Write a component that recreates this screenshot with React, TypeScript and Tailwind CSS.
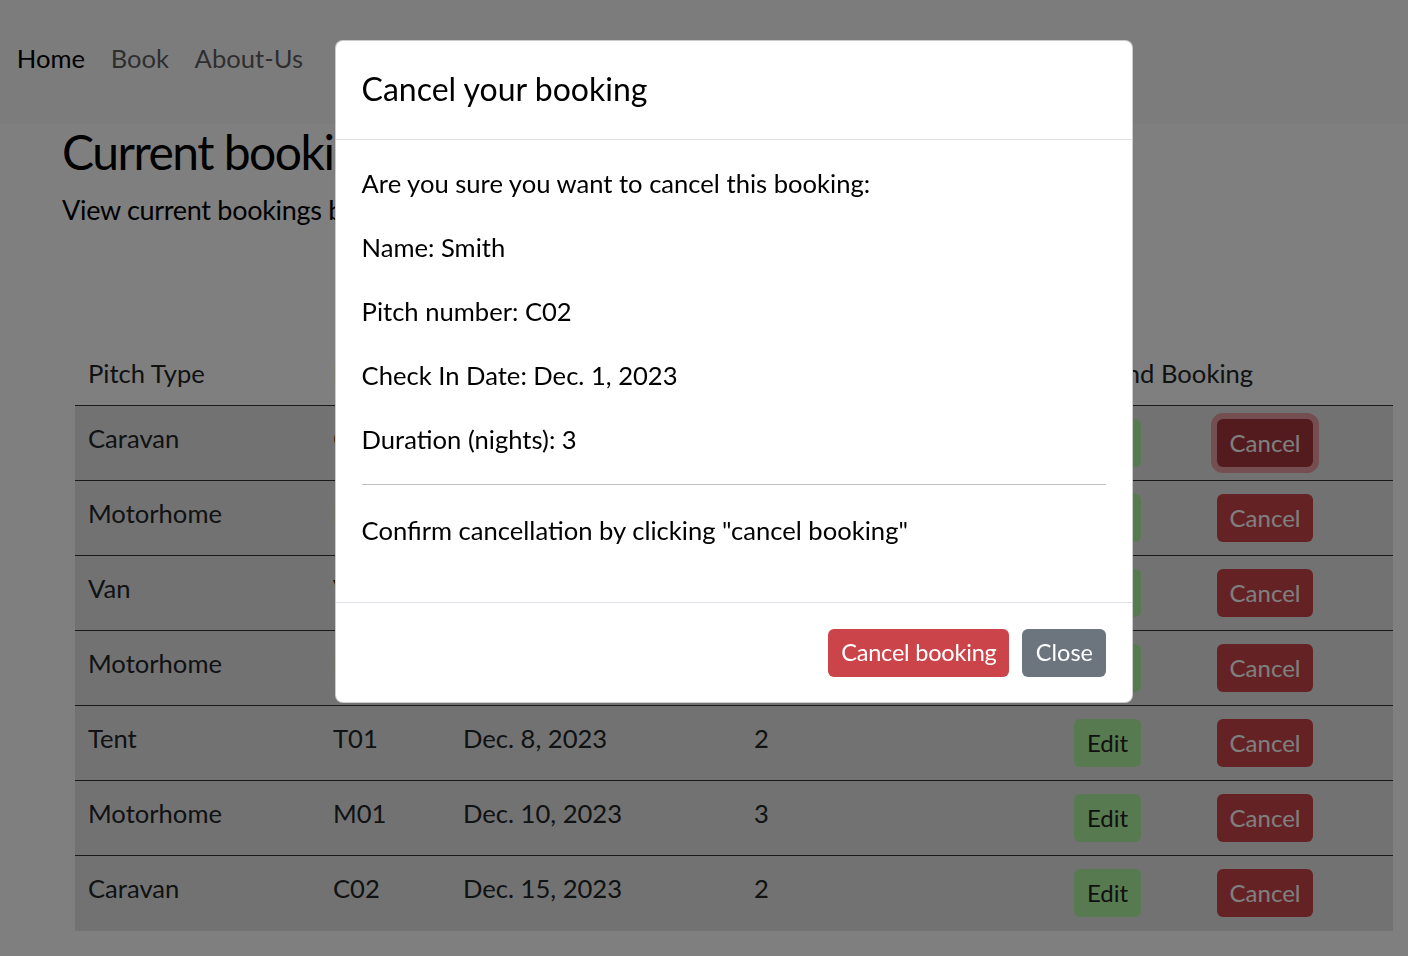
import React from 'react';

const bookings = [
  { type: 'Caravan', pitch: 'C02', date: 'Dec. 1, 2023', nights: '3' },
  { type: 'Motorhome', pitch: 'M01', date: 'Dec. 3, 2023', nights: '2' },
  { type: 'Van', pitch: 'V01', date: 'Dec. 4, 2023', nights: '4' },
  { type: 'Motorhome', pitch: 'M02', date: 'Dec. 6, 2023', nights: '1' },
  { type: 'Tent', pitch: 'T01', date: 'Dec. 8, 2023', nights: '2' },
  { type: 'Motorhome', pitch: 'M01', date: 'Dec. 10, 2023', nights: '3' },
  { type: 'Caravan', pitch: 'C02', date: 'Dec. 15, 2023', nights: '2' },
];

function Navbar() {
  return (
    <nav className="h-[124px] bg-[#f8f9fa] px-[4px] pt-[39px]">
      <ul className="flex text-[25.6px] leading-[38.4px]">
        <li className="px-[12.8px] text-black">Home</li>
        <li className="px-[12.8px] text-black/65">Book</li>
        <li className="px-[12.8px] text-black/65">About-Us</li>
      </ul>
    </nav>
  );
}

function BookingTable() {
  return (
    <table className="ml-[75px] w-[1318px] table-fixed border-collapse text-[25.6px] leading-[38.4px] text-[#212529]">
      <colgroup>
        <col className="w-[245px]" />
        <col className="w-[130px]" />
        <col className="w-[291px]" />
        <col className="w-[320px]" />
        <col className="w-[143px]" />
        <col className="w-[189px]" />
      </colgroup>
      <thead>
        <tr className="border-b border-[#333]">
          <th className="p-[13px] text-left font-normal">Pitch Type</th>
          <th className="p-[13px] text-left font-normal">Pitch</th>
          <th className="p-[13px] text-left font-normal">Check In Date</th>
          <th className="p-[13px] text-left font-normal">Duration</th>
          <th colSpan={2} className="p-[13px] text-left font-normal">Amend Booking</th>
        </tr>
      </thead>
      <tbody>
        {bookings.map((b, i) => (
          <tr key={i} className="border-b border-[#333] bg-[#e4e4e4] last:border-[#e4e4e4]">
            <td className="p-[13px] align-top">{b.type}</td>
            <td className="p-[13px] align-top">{b.pitch}</td>
            <td className="p-[13px] align-top">{b.date}</td>
            <td className="p-[13px] align-top">{b.nights}</td>
            <td className="p-[13px] align-top">
              <button className="h-[48px] w-[67px] rounded-[6px] bg-[#aef4a0] text-[24px] text-[#222]">Edit</button>
            </td>
            <td className="p-[13px] align-top">
              <button
                className={
                  i === 0
                    ? 'h-[48px] w-[96px] rounded-[6px] bg-[#a8363e] text-[24px] text-white ring-[6px] ring-[#e89ca0]'
                    : 'h-[48px] w-[96px] rounded-[6px] bg-[#cb444a] text-[24px] text-white'
                }
              >
                Cancel
              </button>
            </td>
          </tr>
        ))}
      </tbody>
    </table>
  );
}

function CancelModal() {
  return (
    <div className="fixed inset-0 z-20">
      <div className="absolute inset-0 bg-black/50" />
      <div className="absolute left-[335px] top-[40px] w-[798px] rounded-[8px] border border-black/20 bg-white text-[25.6px] leading-[38.4px] text-black">
        <div className="border-b border-[#dee2e6] px-[25.6px] py-[25.2px]">
          <h1 className="text-[32px] leading-[46px] pb-[2px]">Cancel your booking</h1>
        </div>
        <div className="p-[25.6px] pt-[24px]">
          <p className="mb-[25.6px]">Are you sure you want to cancel this booking:</p>
          <p className="mb-[25.6px]">Name: Smith</p>
          <p className="mb-[25.6px]">Pitch number: C02</p>
          <p className="mb-[25.6px]">Check In Date: Dec. 1, 2023</p>
          <p>Duration (nights): 3</p>
          <hr className="my-[25.6px] border-t border-[#c0c0c0]" />
          <p className="mb-[27px]">Confirm cancellation by clicking "cancel booking"</p>
        </div>
        <div className="flex justify-end gap-[13px] border-t border-[#dee2e6] px-[25.6px] pb-[25.6px] pt-[25.6px]">
          <button className="h-[48px] w-[181px] rounded-[6px] bg-[#cb444a] text-[23.5px] tracking-[-0.2px] text-white">Cancel booking</button>
          <button className="h-[48px] w-[84px] rounded-[6px] bg-[#6c757d] text-[23.5px] text-white">Close</button>
        </div>
      </div>
    </div>
  );
}

export default function App() {
  return (
    <div className="min-h-[956px] bg-white font-['Lato',sans-serif] text-[#212529]">
      <Navbar />
      <main>
        <h2 className="ml-[62px] text-[48px] leading-[56px] tracking-[-1.5px] text-black">Current bookings</h2>
        <p className="ml-[62px] mt-[10px] text-[27px] leading-[40px] tracking-[-0.3px] text-black">View current bookings below</p>
        <div className="h-[111px]" />
        <BookingTable />
      </main>
      <CancelModal />
    </div>
  );
}
